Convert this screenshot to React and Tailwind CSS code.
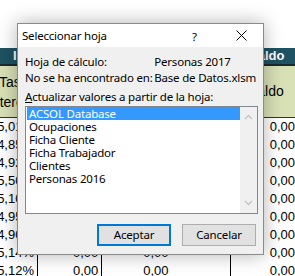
const rows = [
  ['5,01%', '0,00', '0,00', '0,00'],
  ['4,85%', '0,00', '0,00', '0,00'],
  ['4,92%', '0,00', '0,00', '0,00'],
  ['5,50%', '0,00', '0,00', '0,00'],
  ['5,10%', '0,00', '0,00', '0,00'],
  ['4,95%', '0,00', '0,00', '0,00'],
  ['4,90%', '0,00', '0,00', '0,00'],
  ['5,14%', '0,00', '0,00', '0,00'],
  ['5,12%', '0,00', '0,00', '0,00'],
];

const sheets = ['ACSOL Database', 'Ocupaciones', 'Ficha Cliente', 'Ficha Trabajador', 'Clientes', 'Personas 2016'];

const Sheet = () => (
  <div className="flex flex-col text-[13px] text-black whitespace-nowrap" style={{ fontFamily: '"Liberation Sans", Arial, sans-serif' }}>
    <div className="h-[48px]" />
    {/* header row */}
    <div className="h-[16px] bg-[#1f5262] text-white font-bold flex items-center">
      <span className="ml-[13px] w-[200px]">Int</span>
      <span className="ml-[36px]">Saldo</span>
    </div>
    <div className="h-[2px] bg-[#1a2a2e]" />
    {/* titles */}
    <div className="h-[51px] bg-[#d8e0b6] flex text-[14px]">
      <div className="w-[200px] flex flex-col justify-center leading-[20px]">
        <span className="-ml-px">Tasa</span>
        <span className="-ml-[12px]">Interés</span>
      </div>
      <div className="flex items-center ml-[48px]">Saldo</div>
    </div>
    <div className="h-px bg-[#333]" />
    {rows.map((r, i) => (
      <div key={i} className="h-[18px] flex items-center">
        <div className="w-[38px] h-full flex items-center justify-end pr-[3px] border-r border-black">{r[0]}</div>
        <div className="w-[66px] h-full flex items-center justify-end pr-[3px] border-r border-black">{r[1]}</div>
        <div className="w-[131px] h-full flex items-center pl-[41px] border-r border-black">{r[2]}</div>
        <div className="w-[66px] h-full flex items-center justify-end">{r[3]}</div>
      </div>
    ))}
  </div>
);

const Chevron = ({ up }) => (
  <svg width="9" height="6" viewBox="0 0 9 6">
    <polyline
      points={up ? '1,5 4.5,1.5 8,5' : '1,1 4.5,4.5 8,1'}
      fill="none"
      stroke="#c2c2c2"
      strokeWidth="1.3"
    />
  </svg>
);

const Dialog = () => (
  <div
    className="absolute left-[17px] top-[23px] w-[247px] h-[232px] border border-[#8a8a8a] bg-[#f0f0f0] shadow-[0_0_18px_rgba(0,0,0,0.3)] flex flex-col text-[11.5px] tracking-[-0.2px] text-black whitespace-nowrap"
    style={{ fontFamily: '"Noto Sans", Lato, sans-serif' }}
  >
    <div className="h-[23px] shrink-0 bg-white flex items-center pl-[4px] relative">
      <span>Seleccionar hoja</span>
      <span className="absolute left-[174px] top-[4px]">?</span>
      <svg className="absolute left-[218px] top-[6px]" width="11" height="11" viewBox="0 0 11 11">
        <path d="M0.5 0.5 L10.5 10.5 M10.5 0.5 L0.5 10.5" stroke="#000" strokeWidth="1" />
      </svg>
    </div>
    <div className="px-[7px] pt-[7px] flex flex-col">
      <div className="flex leading-[16px]">
        <div className="w-[135px] flex flex-col">
          <span>Hoja de cálculo:</span>
          <span>No se ha encontrado en:</span>
        </div>
        <div className="flex flex-col">
          <span>Personas 2017</span>
          <span>Base de Datos.xlsm</span>
        </div>
      </div>
      <div className="mt-[3px] leading-[16px]">
        <span className="underline">A</span>ctualizar valores a partir de la hoja:
      </div>
      <div className="mt-px h-[108px] w-[233px] border border-[#828790] bg-white flex">
        <div className="flex-1 pl-px flex flex-col">
          {sheets.map((s, i) => (
            <div
              key={s}
              className={`h-[13px] leading-[13px] pl-[2px] ${i === 0 ? 'bg-[#3399ff] text-white' : ''}`}
            >
              {s}
            </div>
          ))}
        </div>
        <div className="w-[17px] bg-[#f0f0f0] flex flex-col items-center justify-between py-[7px]">
          <Chevron up />
          <Chevron />
        </div>
      </div>
      <div className="mt-[10px] flex justify-end gap-[11px]">
        <button className="w-[74px] h-[22px] bg-[#e1e1e1] border-2 border-[#0078d7] flex items-center justify-center">
          Aceptar
        </button>
        <button className="w-[74px] h-[22px] bg-[#e1e1e1] border border-[#adadad] flex items-center justify-center">
          Cancelar
        </button>
      </div>
    </div>
  </div>
);

export default function App() {
  return (
    <div className="relative w-[295px] h-[276px] overflow-hidden bg-white">
      <Sheet />
      <Dialog />
    </div>
  );
}
